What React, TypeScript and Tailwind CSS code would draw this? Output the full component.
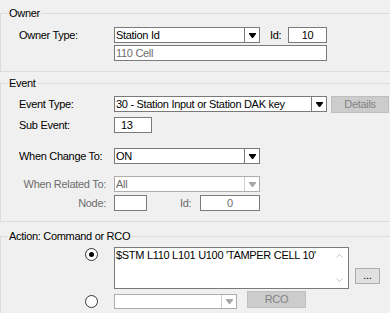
import type { ReactNode } from "react";

function DropArrow({ disabled }: { disabled?: boolean }) {
  return (
    <div
      className={`flex w-[15px] shrink-0 items-center justify-center border-l ${
        disabled ? "border-[#cfcfcf]" : "border-[#7a7a7a]"
      }`}
    >
      <svg width="7" height="5" viewBox="0 0 7 5">
        <path d="M0 0h7v1L4 5H3L0 1z" fill={disabled ? "#a6a6a6" : "#000"} />
      </svg>
    </div>
  );
}

function Combo({
  value,
  className,
  disabled,
}: {
  value: string;
  className: string;
  disabled?: boolean;
}) {
  return (
    <div
      className={`flex h-[16px] shrink-0 border bg-white ${className} ${
        disabled ? "border-[#adadad] text-[#6d6d6d]" : "border-[#7a7a7a]"
      }`}
    >
      <div className="flex flex-1 items-center overflow-hidden whitespace-nowrap pl-[1px]">
        {value}
      </div>
      <DropArrow disabled={disabled} />
    </div>
  );
}

function TextBox({
  value,
  className,
  muted,
}: {
  value?: string;
  className: string;
  muted?: boolean;
}) {
  return (
    <div
      className={`flex h-[16px] shrink-0 items-center border border-[#7a7a7a] bg-white ${className} ${
        muted ? "text-[#6d6d6d]" : ""
      }`}
    >
      {value}
    </div>
  );
}

function Label({
  children,
  right,
  disabled,
}: {
  children: ReactNode;
  right?: boolean;
  disabled?: boolean;
}) {
  return (
    <span
      className={`w-[95px] shrink-0 whitespace-nowrap ${right ? "pr-[8px] text-right" : ""} ${
        disabled ? "text-[#6d6d6d]" : ""
      }`}
    >
      {children}
    </span>
  );
}

function Radio({ checked, className }: { checked?: boolean; className?: string }) {
  return (
    <span
      className={`flex h-[13px] w-[13px] shrink-0 items-center justify-center rounded-full border border-[#333333] bg-white ${
        className ?? ""
      }`}
    >
      {checked && <span className="h-[5px] w-[5px] rounded-full bg-black" />}
    </span>
  );
}

function Group({ title, children, className }: { title: string; children: ReactNode; className?: string }) {
  return (
    <fieldset className={`m-0 w-[394px] border border-[#dcdcdc] p-0 ${className ?? ""}`}>
      <legend className="ml-[7px] px-[1px] leading-[13px]">{title}</legend>
      {children}
    </fieldset>
  );
}

function Chevron({ up }: { up?: boolean }) {
  return (
    <svg width="7" height="4" viewBox="0 0 7 4">
      <path
        d={up ? "M0.5 3.5L3.5 0.5L6.5 3.5" : "M0.5 0.5L3.5 3.5L6.5 0.5"}
        fill="none"
        stroke="#c2c2c2"
        strokeWidth="1"
      />
    </svg>
  );
}

export default function App() {
  return (
    <div className="h-[313px] w-[390px] overflow-hidden bg-[#f0f0f0] pt-[7px] font-['Liberation_Sans',Arial,sans-serif] text-[11px] leading-[13px] tracking-[-0.3px] text-black">
      <Group title="Owner">
        <div className="flex flex-col pb-[10px] pl-[18px] pt-[7px]">
          <div className="flex h-[16px] items-center">
            <Label>Owner Type:</Label>
            <Combo value="Station Id" className="w-[146px]" />
            <span className="ml-[10px] w-[18px]">Id:</span>
            <TextBox value="10" className="w-[39px] justify-center" />
          </div>
          <div className="mt-[2px] flex h-[16px] items-center">
            <span className="w-[95px] shrink-0" />
            <TextBox value="110 Cell" className="w-[213px] pl-[1px]" muted />
          </div>
        </div>
      </Group>

      <Group title="Event" className="mt-[5px]">
        <div className="flex flex-col pb-[10px] pl-[18px] pt-[6px]">
          <div className="flex h-[16px] items-center">
            <Label>Event Type:</Label>
            <Combo value="30 - Station Input or Station DAK key" className="w-[213px]" />
            <button className="ml-[4px] flex h-[17px] w-[58px] items-center justify-center border border-[#bfbfbf] bg-[#cccccc] text-[#838383]">
              Details
            </button>
          </div>
          <div className="mt-[5px] flex h-[16px] items-center">
            <Label>Sub Event:</Label>
            <TextBox value="13" className="w-[38px] pl-[6px]" />
          </div>
          <div className="mt-[15px] flex h-[16px] items-center">
            <Label>When Change To:</Label>
            <Combo value="ON" className="w-[146px]" />
          </div>
          <div className="mt-[12px] flex h-[16px] items-center">
            <Label right disabled>
              When Related To:
            </Label>
            <Combo value="All" className="w-[146px]" disabled />
          </div>
          <div className="mt-[3px] flex h-[16px] items-center">
            <Label right disabled>
              Node:
            </Label>
            <TextBox className="w-[33px]" />
            <span className="ml-[33px] w-[20px] text-[#6d6d6d]">Id:</span>
            <TextBox value="0" className="w-[60px] justify-center" muted />
          </div>
        </div>
      </Group>

      <Group title="Action: Command or RCO" className="mt-[8px]">
        <div className="flex flex-col pb-[20px] pl-[84px] pt-[4px]">
          <div className="flex">
            <Radio checked className="mt-[1px]" />
            <div className="ml-[16px] flex h-[42px] w-[235px] border border-[#7a7a7a] bg-white">
              <div className="flex-1 whitespace-nowrap pl-[1px] pt-[1px]">
                $STM L110 L101 U100 'TAMPER CELL 10'
              </div>
              <div className="flex w-[17px] flex-col items-center justify-between py-[6px]">
                <Chevron up />
                <Chevron />
              </div>
            </div>
            <button className="mb-[5px] ml-[6px] flex h-[16px] w-[25px] items-center justify-center self-end border border-[#adadad] bg-[#e1e1e1] pb-[2px]">
              ...
            </button>
          </div>
          <div className="mt-[2px] flex h-[18px] items-start">
            <Radio className="mt-[4px]" />
            <div className="ml-[16px] mt-[3px] flex h-[15px] w-[123px] border border-[#adadad] bg-white">
              <div className="flex-1" />
              <DropArrow disabled />
            </div>
            <button className="ml-[10px] flex h-[17px] w-[59px] items-center justify-center border border-[#bfbfbf] bg-[#cccccc] text-[#838383]">
              RCO
            </button>
          </div>
        </div>
      </Group>
    </div>
  );
}
